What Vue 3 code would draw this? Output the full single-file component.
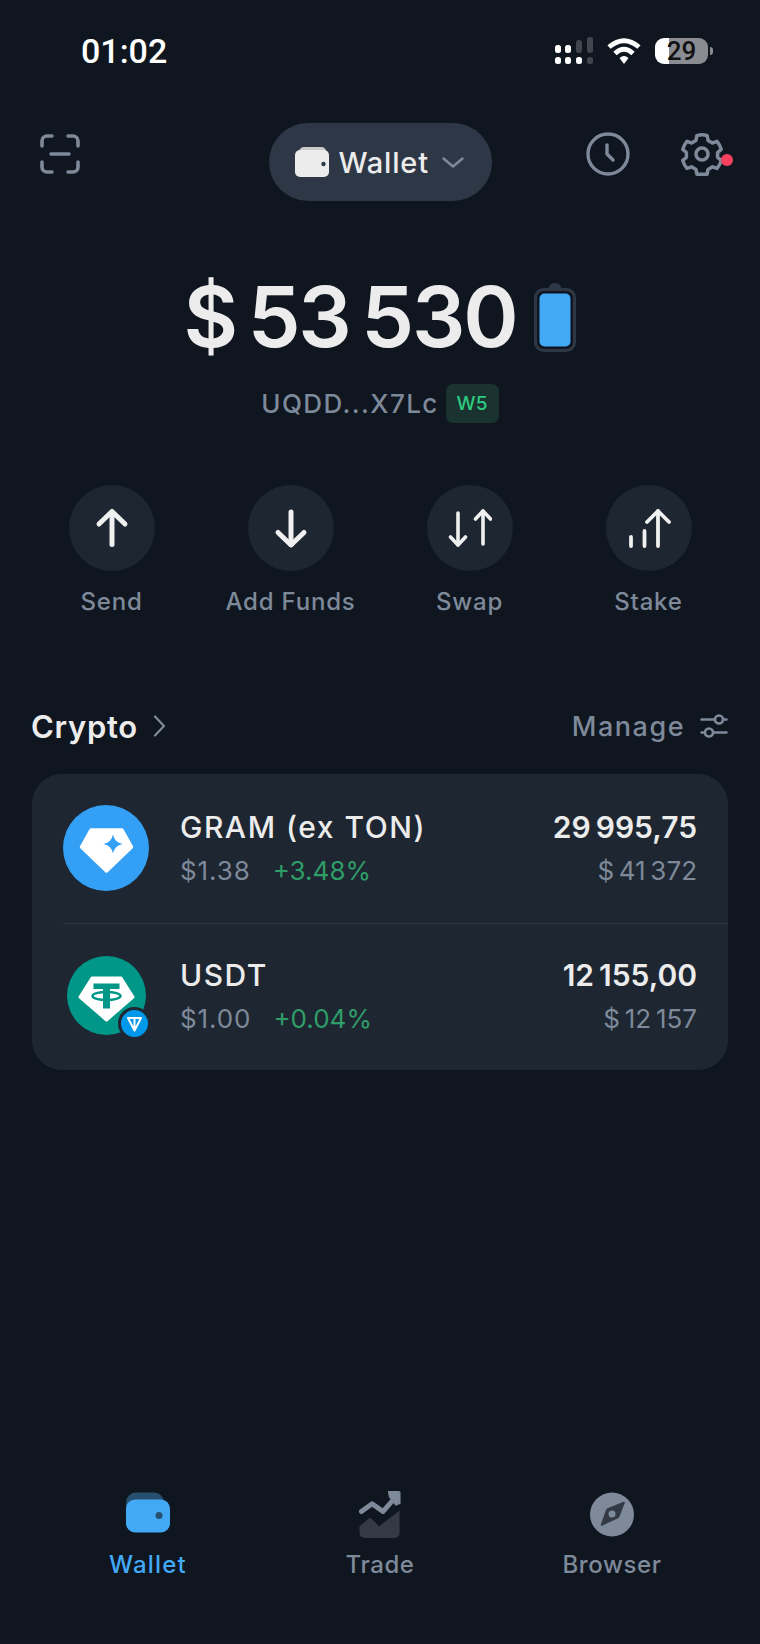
<template>
  <div class="pantalla">
    <div class="estado">
      <span class="hora">01:02</span>
      <div class="estado-iconos">
        <svg width="38" height="27" viewBox="0 0 38 27">
          <g fill="#fff">
            <rect x="0" y="8" width="6" height="8" rx="2.5" />
            <rect x="10" y="8" width="6" height="8" rx="2.5" />
            <rect x="0" y="20" width="6" height="7" rx="2.5" />
            <rect x="10" y="20" width="6" height="7" rx="2.5" />
            <rect x="21" y="20" width="6" height="7" rx="2.5" />
          </g>
          <g fill="#40454e">
            <rect x="21" y="3" width="6" height="13" rx="2.5" />
            <rect x="32" y="0" width="6" height="16" rx="2.5" />
            <rect x="32" y="20" width="6" height="7" rx="2.5" />
          </g>
        </svg>
        <svg width="34" height="27" viewBox="0 0 34 27">
          <g fill="none" stroke="#fff" stroke-width="4.8">
            <path d="M2 10 Q17 -2.5 32 10" />
            <path d="M8 16.5 Q17 8 26 16.5" />
          </g>
          <path d="M12.5 21 Q17 17 21.5 21 L17 27Z" fill="#fff" />
        </svg>
        <div class="bateria-estado"><span>29</span></div>
      </div>
    </div>

    <header class="cabecera">
      <div class="cab-izq">
        <svg width="40" height="40" viewBox="0 0 40 40" fill="none" stroke="#7e8999" stroke-width="3.6" stroke-linecap="round" stroke-linejoin="round">
          <path d="M2 12V7a5 5 0 0 1 5-5h5M28 2h5a5 5 0 0 1 5 5v5M2 28v5a5 5 0 0 0 5 5h5M38 28v5a5 5 0 0 1-5 5h-5M11 20h18" />
        </svg>
      </div>
      <button class="pastilla">
        <svg width="34" height="30" viewBox="0 0 34 30">
          <path d="M4 5a5 5 0 0 1 5-5h17a5 5 0 0 1 5 4z" fill="#c9c9c9" />
          <path d="M0 8a5 5 0 0 1 5-5h24a5 5 0 0 1 5 5v17a5 5 0 0 1-5 5H5a5 5 0 0 1-5-5z" fill="#ececec" />
          <circle cx="28.5" cy="17" r="2.2" fill="#2e3746" />
        </svg>
        <span>Wallet</span>
        <svg class="pastilla-flecha" width="22" height="11" viewBox="0 0 22 11" fill="none" stroke="#7e8999" stroke-width="2.4" stroke-linecap="round" stroke-linejoin="round">
          <path d="M1.5 1.5 11 9.5l9.5-8" />
        </svg>
      </button>
      <div class="cab-der">
        <svg width="44" height="44" viewBox="0 0 44 44" fill="none" stroke="#7e8999" stroke-width="3.4" stroke-linecap="round" stroke-linejoin="round">
          <circle cx="22" cy="22" r="20" />
          <path d="M21 13v9l6 6" />
        </svg>
        <div class="engranaje">
          <svg width="44" height="44" viewBox="0 0 24 24" fill="none" stroke="#7e8999" stroke-width="1.9" stroke-linecap="round" stroke-linejoin="round">
            <path d="M12 1.5c1 0 1.9.2 2.8.5l.5 2.6 2.4 1.4 2.5-.9c1.1 1.3 1.9 2.8 2.3 4.4l-2 1.7v2.6l2 1.7c-.4 1.600-1.200 3.100-2.300 4.400l-2.500-.9-2.400 1.400-.5 2.600h-5.600l-.5-2.600-2.400-1.400-2.500.9c-1.100-1.300-1.900-2.800-2.300-4.400l2-1.700v-2.600l-2-1.700c.4-1.600 1.200-3.100 2.300-4.400l2.500.9 2.400-1.400.5-2.600c.9-.3 1.800-.5 2.800-.5z" />
            <circle cx="12" cy="12" r="3.300" />
          </svg>
          <i class="punto"></i>
        </div>
      </div>
    </header>

    <section class="saldo">
      <div class="saldo-linea">
        <span class="cifra">$&#8201;53&#8201;530</span>
        <svg width="42" height="70" viewBox="0 0 42 70">
          <path d="M14 8q1-7 7-7t7 7z" fill="#2e3746" />
          <rect x="1.500" y="7.500" width="39" height="61" rx="8" fill="#0f1620" stroke="#2e3746" stroke-width="3" />
          <rect x="5.500" y="11.500" width="31" height="53" rx="5" fill="#42a9f7" />
        </svg>
      </div>
      <div class="direccion">
        <span>UQDD...X7Lc</span>
        <span class="version">W5</span>
      </div>
    </section>

    <nav class="acciones">
      <div v-for="a in acciones" :key="a.nombre" class="accion">
        <div class="accion-circulo">
          <svg width="44" height="44" viewBox="0 0 44 44" fill="none" stroke="#f0f0f0" stroke-linecap="round" stroke-linejoin="round">
            <path v-for="(d, i) in a.trazos" :key="i" :d="d" :stroke-width="a.grosor" />
          </svg>
        </div>
        <span>{{ a.nombre }}</span>
      </div>
    </nav>

    <div class="seccion">
      <div class="seccion-titulo">
        <span>Crypto</span>
        <svg width="13" height="22" viewBox="0 0 13 22" fill="none" stroke="#7e8999" stroke-width="2.200" stroke-linecap="round" stroke-linejoin="round">
          <path d="M2 1.500 11 11l-9 9.500" />
        </svg>
      </div>
      <div class="seccion-gestion">
        <span>Manage</span>
        <svg width="28" height="28" viewBox="0 0 28 28" fill="none" stroke="#7e8999" stroke-width="2.600" stroke-linecap="round">
          <path d="M1.500 7.500h13M23.500 7.500h3M1.500 20.500h3M13.500 20.500h13" />
          <circle cx="19" cy="7.500" r="4" />
          <circle cx="9" cy="20.500" r="4" />
        </svg>
      </div>
    </div>

    <div class="tarjeta">
      <div class="fila">
        <div class="logo">
          <svg width="86" height="86" viewBox="0 0 86 86">
            <circle cx="43" cy="43" r="43" fill="#339ff5" />
            <path d="M28 25H59L68.500 42 43.500 66 18.500 42z" fill="#fff" stroke="#fff" stroke-width="3.500" stroke-linejoin="round" />
            <path d="M50 29.500Q51.500 37.500 59.500 39 51.500 40.500 50 48.500 48.500 40.500 40.500 39 48.500 37.500 50 29.500z" fill="#339ff5" />
          </svg>
        </div>
        <div class="datos">
          <div class="nombre">GRAM (ex TON)</div>
          <div class="precio"><span class="precio-valor">$1.38</span><span class="cambio">+3.48%</span></div>
        </div>
        <div class="importes">
          <div class="cantidad">29&#8201;995,75</div>
          <div class="valor">$&#8201;41&#8201;372</div>
        </div>
      </div>
      <div class="separador"></div>
      <div class="fila fila-usdt">
        <div class="logo logo-usdt">
          <svg width="79" height="79" viewBox="0 0 79 79">
            <circle cx="39.500" cy="39.500" r="39.500" fill="#009688" />
            <path d="M25 22H54L66 41 39.500 64 13 41z" fill="#fff" stroke="#fff" stroke-width="3" stroke-linejoin="round" />
            <path d="M26.500 27.500h26V33h-9.500v19.500h-7V33h-9.500z" fill="#009688" />
            <ellipse cx="39.500" cy="40" rx="14" ry="4" fill="none" stroke="#009688" stroke-width="2.500" />
          </svg>
          <svg class="insignia" width="33" height="33" viewBox="0 0 33 33">
            <circle cx="16.500" cy="16.500" r="15" fill="#0098ea" stroke="#1d2631" stroke-width="3" />
            <path d="M10 11h13l-6.500 12.500zM16.500 11v12.500" fill="none" stroke="#fff" stroke-width="2" stroke-linejoin="round" />
          </svg>
        </div>
        <div class="datos">
          <div class="nombre">USDT</div>
          <div class="precio"><span class="precio-valor">$1.00</span><span class="cambio">+0.04%</span></div>
        </div>
        <div class="importes">
          <div class="cantidad">12&#8201;155,00</div>
          <div class="valor">$&#8201;12&#8201;157</div>
        </div>
      </div>
    </div>

    <footer class="pestanas">
      <div class="pestana activa">
        <svg width="44" height="40" viewBox="0 0 44 40">
          <path d="M0 10a10 10 0 0 1 10-10h18a10 10 0 0 1 10 10v10H0z" fill="#27506f" />
          <rect x="0" y="7" width="44" height="33" rx="9" fill="#42a9f7" />
          <circle cx="33" cy="23" r="3.500" fill="#27506f" />
        </svg>
        <span>Wallet</span>
      </div>
      <div class="pestana">
        <svg width="44" height="48" viewBox="0 0 44 48">
          <path d="M1 36l11-9 9 9L42 20v23a5 5 0 0 1-5 5H6a5 5 0 0 1-5-5z" fill="#333a46" />
          <path d="M3 21l11-8 11 8L39 5" fill="none" stroke="#7e8999" stroke-width="5" stroke-linecap="round" stroke-linejoin="round" />
          <path d="M30 0h11a2 2 0 0 1 2 2v11l-5 2-7-9z" fill="#7e8999" />
        </svg>
        <span>Trade</span>
      </div>
      <div class="pestana">
        <svg width="44" height="44" viewBox="0 0 44 44">
          <circle cx="22" cy="22" r="22" fill="#7e8999" />
          <path d="M33 9.500a1 1 0 0 1 1.500 1.500l-5 13a4 4 0 0 1-2 2l-15 7a1 1 0 0 1-1.500-1.500l5-14a4 4 0 0 1 2-2z" fill="#333a46" />
          <circle cx="22" cy="21.500" r="3.500" fill="#7e8999" />
        </svg>
        <span>Browser</span>
      </div>
    </footer>
  </div>
</template>

<script setup>
const acciones = [
  { nombre: 'Send', grosor: 5, trazos: ['M22 38.5V6', 'M9 18 22 5.500 35 18'] },
  { nombre: 'Add Funds', grosor: 5, trazos: ['M22 6v32.500', 'M9 26.500 22 39l13-12.500'] },
  { nombre: 'Swap', grosor: 3.6, trazos: ['M10 7v32', 'M2.500 31 10 39l7.500-8', 'M35 5v33', 'M27.500 13 35 5l7.500 8'] },
  { nombre: 'Stake', grosor: 3.8, trazos: ['M4 31v9', 'M17.500 25v15', 'M31 5v35', 'M20 16 31 5l11 11'] }
]
</script>

<style>
html, body {
  margin: 0;
  background: #0f1620;
}
</style>

<style scoped>
.pantalla {
  width: 760px;
  height: 1644px;
  background: #0f1620;
  color: #ececec;
  font-family: Inter, "Liberation Sans", sans-serif;
  display: flex;
  flex-direction: column;
  overflow: hidden;
}

.estado {
  height: 100px;
  box-sizing: border-box;
  padding: 33px 52px 0 81px;
  display: flex;
  justify-content: space-between;
  align-items: flex-start;
}

.hora {
  font-family: Roboto, sans-serif;
  font-size: 34px;
  font-weight: 500;
  line-height: 36px;
  color: #fff;
}

.estado-iconos {
  display: flex;
  align-items: center;
  gap: 14px;
  margin-top: 4px;
}

.bateria-estado {
  position: relative;
  width: 53px;
  height: 26px;
  border-radius: 9px;
  background: linear-gradient(90deg, #fff 27%, #8a8c91 27%);
  color: #111;
  font-family: Roboto, sans-serif;
  font-size: 26px;
  font-weight: 500;
  line-height: 26px;
  text-align: center;
}

.bateria-estado::after {
  content: "";
  position: absolute;
  right: -5px;
  top: 9px;
  width: 3px;
  height: 8px;
  border-radius: 0 3px 3px 0;
  background: #8a8c91;
}

.cabecera {
  margin-top: 23px;
  padding: 0 36px;
  display: grid;
  grid-template-columns: 1fr auto 1fr;
  align-items: start;
}

.cab-izq {
  padding: 11px 0 0 4px;
}

.cab-der {
  padding-top: 9px;
  display: flex;
  justify-content: flex-end;
  gap: 50px;
}

.pastilla {
  width: 223px;
  height: 78px;
  border: none;
  border-radius: 39px;
  background: #2e3746;
  color: #ececec;
  font-family: inherit;
  font-size: 29px;
  font-weight: 500;
  letter-spacing: 0.8px;
  display: flex;
  align-items: center;
  justify-content: flex-start;
  gap: 10px;
  padding: 0 0 0 26px;
}

.pastilla-flecha {
  margin-left: 3px;
}

.engranaje {
  position: relative;
  width: 44px;
  height: 44px;
}

.punto {
  position: absolute;
  right: -9px;
  top: 22px;
  width: 12px;
  height: 12px;
  border-radius: 50%;
  background: #f5405f;
}

.saldo {
  margin-top: 81px;
  display: flex;
  flex-direction: column;
  align-items: center;
}

.saldo-linea {
  display: flex;
  align-items: center;
  gap: 18px;
  height: 70px;
}

.cifra {
  font-size: 84px;
  font-weight: 600;
  line-height: 70px;
  letter-spacing: -2.2px;
}

.direccion {
  margin-top: 32px;
  display: flex;
  align-items: center;
  gap: 7px;
  color: #7e8999;
  font-size: 26px;
  font-weight: 500;
  letter-spacing: 1.4px;
}

.version {
  width: 53px;
  height: 39px;
  border-radius: 7px;
  background: #1a3330;
  color: #2ecb80;
  font-size: 19px;
  letter-spacing: 0.4px;
  line-height: 39px;
  text-align: center;
}

.acciones {
  margin-top: 62px;
  padding: 0 22px;
  display: grid;
  grid-template-columns: repeat(4, 1fr);
}

.accion {
  display: flex;
  flex-direction: column;
  align-items: center;
  color: #7e8999;
  font-size: 24px;
  font-weight: 500;
  letter-spacing: 0.8px;
  line-height: 30px;
}

.accion-circulo {
  width: 86px;
  height: 86px;
  margin-bottom: 16px;
  border-radius: 50%;
  background: #1d2631;
  display: flex;
  align-items: center;
  justify-content: center;
}

.seccion {
  margin-top: 89px;
  padding: 0 32px 0 31px;
  display: flex;
  justify-content: space-between;
  align-items: center;
  height: 40px;
}

.seccion-titulo {
  display: flex;
  align-items: center;
  gap: 15px;
  font-size: 31px;
  font-weight: 600;
  letter-spacing: 0.7px;
}

.seccion-gestion {
  display: flex;
  align-items: center;
  gap: 15px;
  color: #7e8999;
  font-size: 27px;
  font-weight: 500;
  letter-spacing: 1.5px;
}

.tarjeta {
  margin: 28px 32px 0;
  height: 296px;
  border-radius: 30px;
  background: #1d2631;
  display: flex;
  flex-direction: column;
}

.fila {
  height: 149px;
  padding: 0 31px;
  display: flex;
  align-items: center;
}

.fila-usdt {
  height: 146px;
}

.logo {
  position: relative;
  width: 86px;
  height: 86px;
  margin: -2px 31px 0 0;
  display: flex;
  align-items: center;
  justify-content: center;
}

.logo-usdt {
  margin-top: -4px;
}

.insignia {
  position: absolute;
  right: -2px;
  bottom: -2px;
}

.datos {
  flex: 1;
}

.nombre {
  font-size: 30px;
  font-weight: 500;
  line-height: 36px;
  letter-spacing: 1.5px;
}

.precio {
  margin-top: 8px;
  display: flex;
  gap: 22px;
  color: #7e8999;
  font-size: 26px;
  line-height: 36px;
}

.precio-valor {
  letter-spacing: 0.9px;
}

.cambio {
  color: #2f9d68;
}

.importes {
  text-align: right;
}

.cantidad {
  font-size: 30px;
  font-weight: 600;
  line-height: 36px;
}

.valor {
  margin-top: 8px;
  color: #7e8999;
  font-size: 26px;
  line-height: 36px;
}

.separador {
  height: 1px;
  margin-left: 31px;
  background: #2c3543;
}

.pestanas {
  margin-top: auto;
  height: 153px;
  box-sizing: border-box;
  padding: 0 32px;
  display: grid;
  grid-template-columns: repeat(3, 1fr);
}

.pestana {
  display: flex;
  flex-direction: column;
  align-items: center;
  justify-content: flex-start;
  height: 88px;
  color: #7e8999;
  font-size: 24px;
  font-weight: 500;
  letter-spacing: 0.6px;
}

.pestana svg {
  height: 48px;
  margin-bottom: 12px;
}

.activa {
  color: #42a9f7;
  letter-spacing: 1.200px;
}

.activa svg {
  margin-top: -2px;
  margin-bottom: 14px;
}
</style>
